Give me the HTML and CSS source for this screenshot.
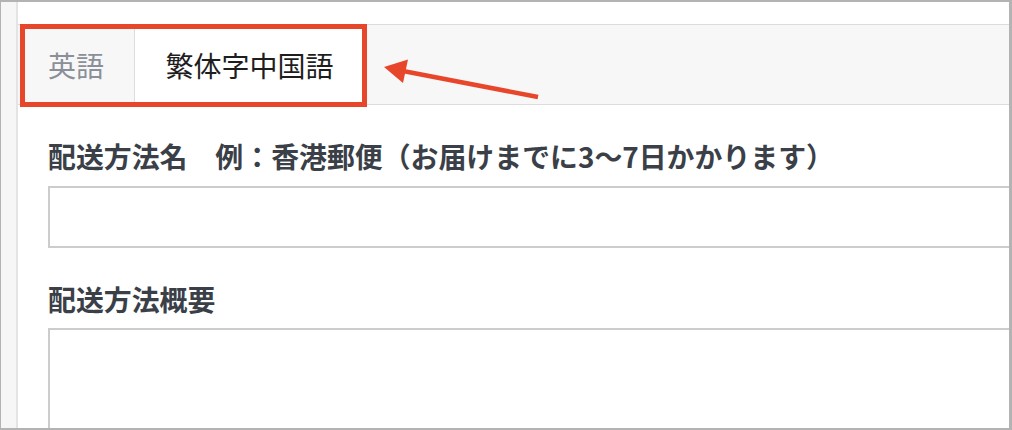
FILE: index.html
```html
<!DOCTYPE html>
<html lang="ja">
<head>
<meta charset="utf-8">
<title>配送方法</title>
<link rel="stylesheet" href="styles.css">
</head>
<body>
<div class="frame">
  <div class="gutter"></div>
  <div class="main">
    <div class="tabbar">
      <div class="tab">英語</div>
      <div class="tab tab-active">繁体字中国語</div>
    </div>
    <div class="form">
      <label class="field-label">配送方法名　例：香港郵便（お届けまでに3〜7日かかります）</label>
      <div class="input"></div>
      <label class="field-label field-label-2">配送方法概要</label>
      <div class="textarea"></div>
    </div>
  </div>
</div>
<div class="highlight"></div>
<svg class="arrow" width="1012" height="430" viewBox="0 0 1012 430" xmlns="http://www.w3.org/2000/svg">
  <line x1="538" y1="97" x2="403" y2="71" stroke="#e8462b" stroke-width="4.5"/>
  <polygon points="384,67 408,59.5 403,83" fill="#e8462b"/>
</svg>
</body>
</html>
```
FILE: styles.css
```css
html, body {
  margin: 0;
  padding: 0;
  background: #ffffff;
}
body {
  position: relative;
  width: 1012px;
  height: 430px;
  overflow: hidden;
  font-family: "Noto Sans CJK JP", "Noto Sans", sans-serif;
}
.frame {
  box-sizing: border-box;
  width: 1012px;
  height: 430px;
  border-style: solid;
  border-color: #b3b3b3;
  border-width: 2px 3px 2px 1px;
  display: flex;
  background: #fff;
}
.gutter {
  width: 15px;
  flex: none;
  background: #f6f6f6;
  border-right: 2px solid #e4e4e4;
}
.main {
  flex: 1;
  min-width: 0;
  overflow: hidden;
  padding-top: 22px;
}
.tabbar {
  display: flex;
  height: 79px;
  background: #f7f7f7;
  border-top: 1px solid #dcdcdc;
  border-bottom: 1px solid #dcdcdc;
}
.tab {
  box-sizing: border-box;
  display: flex;
  align-items: center;
  justify-content: center;
  font-size: 28px;
  color: #8a8f99;
  border-right: 1px solid #dcdcdc;
}
.tab:first-child {
  width: 117px;
}
.tab-active {
  width: 230px;
  height: 80px;
  background: #ffffff;
  color: #1e1e1e;
}
.form {
  padding-left: 30px;
  display: flex;
  flex-direction: column;
}
.field-label {
  display: block;
  font-size: 27.9px;
  font-weight: 700;
  line-height: 40px;
  color: #3a3f48;
  margin-top: 31px;
  margin-bottom: 10px;
  white-space: nowrap;
}
.field-label-2 {
  margin-top: 31px;
  margin-bottom: 9px;
}
.input {
  box-sizing: border-box;
  width: 1000px;
  height: 62px;
  border: 2px solid #cccccc;
  background: #fff;
}
.textarea {
  box-sizing: border-box;
  width: 1000px;
  height: 200px;
  border: 2px solid #cccccc;
  background: #fff;
}
.highlight {
  position: absolute;
  left: 20px;
  top: 24px;
  width: 347px;
  height: 83px;
  box-sizing: border-box;
  border: 5px solid #e8462b;
}
.arrow {
  position: absolute;
  left: 0;
  top: 0;
}
```
